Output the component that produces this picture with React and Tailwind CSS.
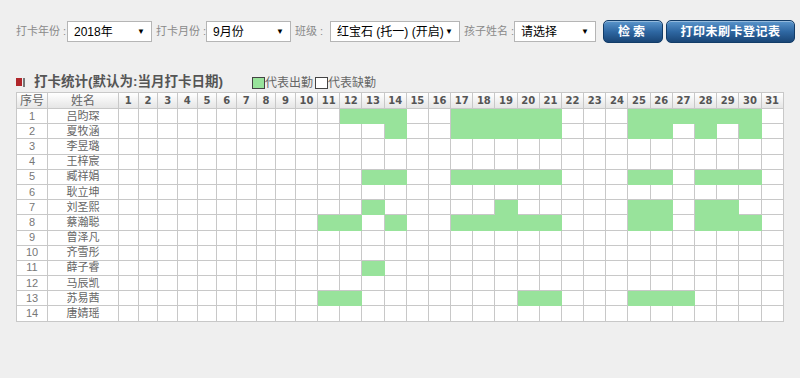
import React from 'react'

const days = Array.from({ length: 31 }, (_, i) => i + 1)

const range = (a, b) => Array.from({ length: b - a + 1 }, (_, i) => a + i)

const students = [
  { id: 1, name: '吕昀琛', days: [12, 13, 14, ...range(17, 21), ...range(25, 30)] },
  { id: 2, name: '夏牧涵', days: [14, ...range(17, 21), 25, 26, 28, 30] },
  { id: 3, name: '李昱璐', days: [] },
  { id: 4, name: '王梓宸', days: [] },
  { id: 5, name: '臧祥娟', days: [13, 14, ...range(17, 21), 25, 26, 28, 29, 30] },
  { id: 6, name: '耿立坤', days: [] },
  { id: 7, name: '刘圣熙', days: [13, 19, 25, 26, 28, 29] },
  { id: 8, name: '蔡瀚聪', days: [11, 12, 14, ...range(17, 21), 25, 26, 28, 29, 30] },
  { id: 9, name: '曾泽凡', days: [] },
  { id: 10, name: '齐雪彤', days: [] },
  { id: 11, name: '薛子睿', days: [13] },
  { id: 12, name: '马辰凯', days: [] },
  { id: 13, name: '苏易茜', days: [11, 12, 20, 21, 25, 26, 27] },
  { id: 14, name: '唐婧瑶', days: [] },
]

const FakeSelect = ({ value, className }) => (
  <div
    className={`flex items-center justify-between h-[21px] bg-white border border-[#b5b5b5] pl-[6px] pr-[6px] text-[12px] text-black whitespace-nowrap ${className}`}
  >
    <span>{value}</span>
    <span className="text-[8px] leading-none">▼</span>
  </div>
)

const Label = ({ children, className }) => (
  <span className={`text-[11px] text-[#8a8a8a] whitespace-nowrap ${className}`}>{children}</span>
)

const BlueButton = ({ children, className }) => (
  <button
    className={`h-[23px] rounded-[5px] border border-[#123c68] bg-gradient-to-b from-[#5b96cc] via-[#2f68a3] to-[#1a4677] text-white text-[12px] font-bold shadow-[inset_0_1px_0_rgba(255,255,255,0.35)] ${className}`}
  >
    {children}
  </button>
)

export default function App() {
  return (
    <div className="w-full h-[378px] bg-[#efefef] font-['Liberation_Sans','Noto_Sans_CJK_SC',sans-serif] overflow-hidden">
      {/* filter bar */}
      <div className="flex items-center pl-[16px] pt-[20px] h-[43px]">
        <Label className="w-[51px]">打卡年份 :</Label>
        <FakeSelect value="2018年" className="w-[85px]" />
        <Label className="w-[50px] ml-[4px]">打卡月份 :</Label>
        <FakeSelect value="9月份" className="w-[85px]" />
        <Label className="w-[35px] ml-[4px]">班级 :</Label>
        <FakeSelect value="红宝石 (托一) (开启)" className="w-[130px]" />
        <Label className="w-[50px] ml-[4px]">孩子姓名 :</Label>
        <FakeSelect value="请选择" className="w-[82px]" />
        <BlueButton className="w-[60px] ml-[7px] tracking-[3px]">检索</BlueButton>
        <BlueButton className="w-[129px] ml-[3px] tracking-[0.5px]">打印未刷卡登记表</BlueButton>
      </div>

      {/* title + legend */}
      <div className="flex items-end pl-[16px] mt-[30px] h-[18px]">
        <div className="flex items-center h-[18px]">
          <span className="w-[6px] h-[8px] bg-[#b0262a]" />
          <span className="w-[2px] h-[9px] bg-[#777] ml-[1px]" />
        </div>
        <span className="ml-[9px] text-[13.5px] font-bold text-[#555] leading-[18px]">打卡统计(默认为:当月打卡日期)</span>
        <div className="flex items-center ml-[29px] mb-[1px]">
          <span className="w-[13px] h-[12px] bg-[#98e39b] border border-[#444]" />
          <span className="text-[12px] text-[#666] leading-[14px] mr-[2px]">代表出勤</span>
          <span className="w-[13px] h-[12px] bg-white border border-[#444]" />
          <span className="text-[12px] text-[#666] leading-[14px]">代表缺勤</span>
        </div>
      </div>

      {/* attendance table */}
      <div className="pl-[16px] mt-[1px]">
        <table className="table-fixed border-collapse w-[767px] border border-[#bdbdbd] bg-white">
          <colgroup>
            <col className="w-[31px]" />
            <col className="w-[71px]" />
            {days.map(d => (
              <col key={d} className={d < 10 ? 'w-[19.67px]' : 'w-[22.18px]'} />
            ))}
          </colgroup>
          <thead>
            <tr className="h-[16px] bg-gradient-to-b from-white to-[#e4e4e4]">
              <th className="border border-[#c8c8c8] text-[12px] font-normal text-[#666] leading-[14px] p-0">序号</th>
              <th className="border border-[#c8c8c8] text-[12px] font-normal text-[#666] leading-[14px] p-0">姓名</th>
              {days.map(d => (
                <th
                  key={d}
                  className="border border-[#c8c8c8] text-[10px] font-bold text-[#555] leading-[14px] p-0 font-['DejaVu_Sans',sans-serif]"
                >
                  {d}
                </th>
              ))}
            </tr>
          </thead>
          <tbody>
            {students.map(s => (
              <tr key={s.id} className="h-[15.2px]">
                <td className="border border-[#c8c8c8] text-center text-[11px] text-[#777] leading-[13px] p-0">{s.id}</td>
                <td className="border border-[#c8c8c8] text-center text-[11px] text-[#666] leading-[13px] p-0">{s.name}</td>
                {days.map(d =>
                  s.days.includes(d) ? (
                    <td key={d} className="border border-[#98e39b] bg-[#98e39b] p-0" />
                  ) : (
                    <td key={d} className="border border-[#c8c8c8] p-0" />
                  )
                )}
              </tr>
            ))}
          </tbody>
        </table>
      </div>
    </div>
  )
}
